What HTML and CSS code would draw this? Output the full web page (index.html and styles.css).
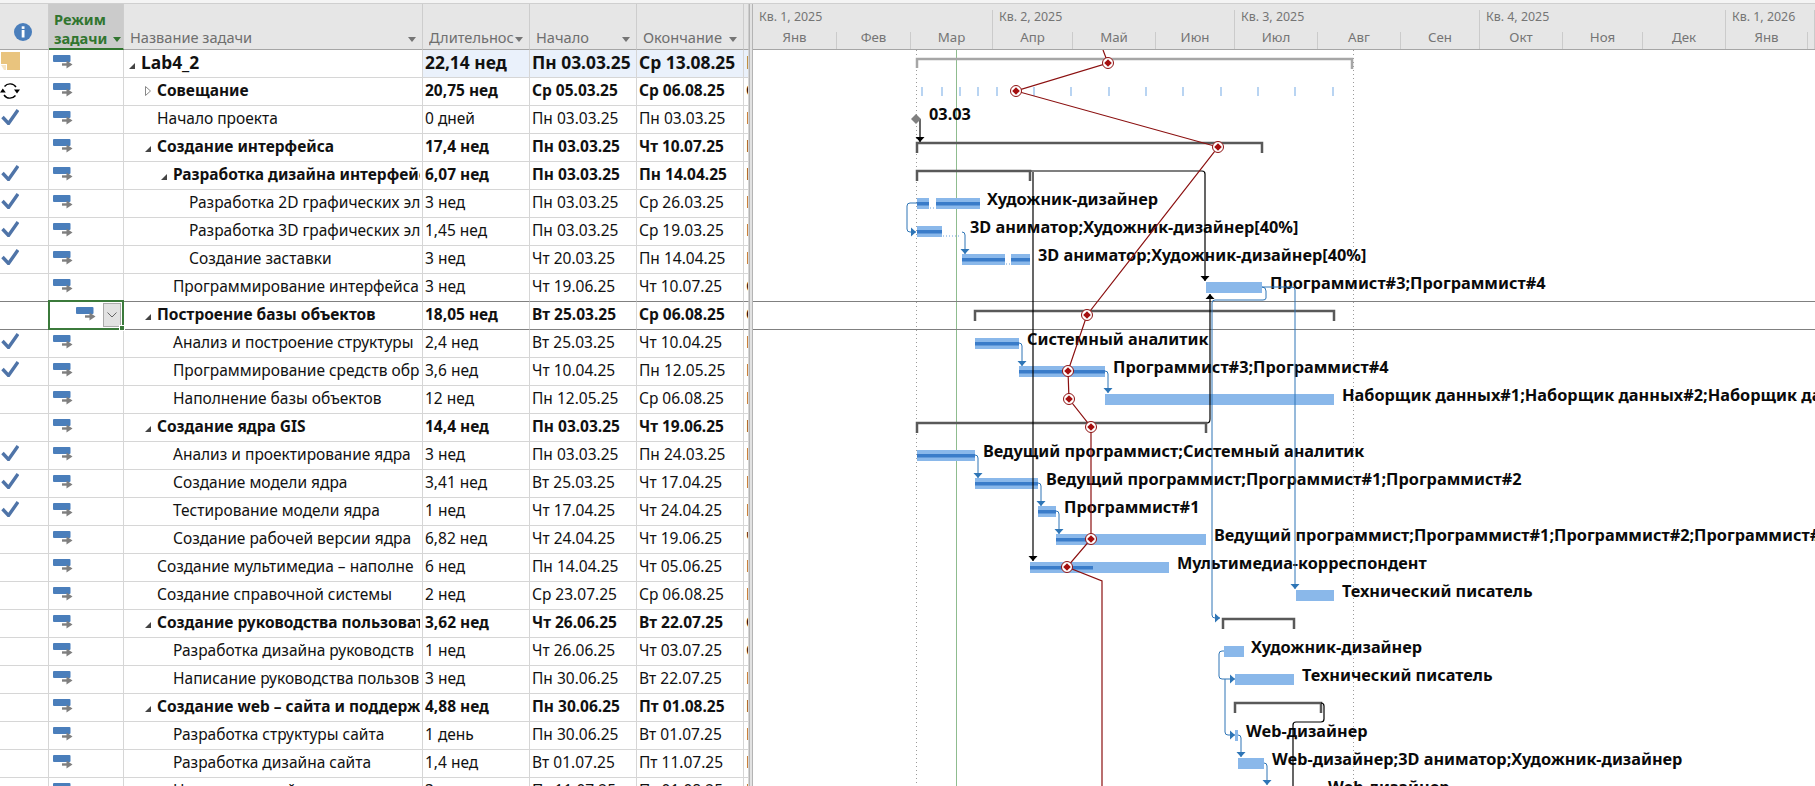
FILE: index.html
```html
<!DOCTYPE html>
<html>
<head>
  <meta charset="utf-8" />
  <title>Lab4_2</title>
  <link rel="stylesheet" href="styles.css">
</head>
<body>
  <svg class="sprite" width="0" height="0">
    <symbol id="i-mode" viewBox="0 0 20 14">
      <rect x="0" y="0" width="17.500" height="7" rx="1" fill="#4a7ebb" />
      <path d="M8 9.500h6" stroke="#fff" stroke-width="5" />
      <path d="M9 9.500h6" stroke="#7f7f7f" stroke-width="2.400" />
      <path d="M13.500 5.500l6 4-6 4z" fill="#7f7f7f" />
    </symbol>
    <symbol id="i-check" viewBox="0 0 18 16">
      <path d="M1.500 8l6 6.500L17 1" fill="none" stroke="#4f74a8" stroke-width="3.400" />
    </symbol>
    <symbol id="i-open" viewBox="0 0 6 6">
      <path d="M6 0v6H0z" fill="#444" />
    </symbol>
    <symbol id="i-closed" viewBox="0 0 6 10">
      <path d="M.5.5l5 4.500-5 4.500z" fill="#fff" stroke="#888" />
    </symbol>
  </svg>

  <div class="topstrip"></div>

  <div class="view">
    <div class="sheet">
      <table>
        <colgroup>
          <col class="c-ind"><col class="c-mode"><col class="c-name"><col class="c-date"><col class="c-date"><col class="c-date"><col class="c-rest">
        </colgroup>
        <thead>
          <tr>
            <th class="th-info">
              <svg width="18" height="18" viewBox="0 0 18 18"><circle cx="9" cy="9" r="9" fill="#4a7ebb" /><rect x="7.700" y="7" width="2.800" height="7.500" fill="#fff" /><rect x="7.700" y="3.300" width="2.800" height="2.600" fill="#fff" /></svg>
            </th>
            <th class="th-mode">Режим<br>задачи <i class="sort green"></i></th>
            <th><div class="th-in"><span>Название задачи</span><i class="sort"></i></div></th>
            <th><div class="th-in"><span class="th-cut">Длительнос</span><i class="sort"></i></div></th>
            <th><div class="th-in"><span>Начало</span><i class="sort"></i></div></th>
            <th><div class="th-in"><span>Окончание</span><i class="sort"></i></div></th>
            <th></th>
          </tr>
        </thead>
        <tbody>
          <tr class="sum root">
            <td class="ind"><svg class="ic-note" width="19" height="18" viewBox="0 0 19 18"><path d="M0 0h19v18H6V12H0z" fill="#e9c47e" /><path d="M0 13h5v5H3z" fill="#e9c47e" opacity=".45" /></svg></td>
            <td class="mode"><svg class="ic"><use href="#i-mode" /></svg></td>
            <td class="name"><div class="l0"><svg class="tg"><use href="#i-open" /></svg>Lab4_2</div></td>
            <td class="hl">22,14 нед</td><td class="hl">Пн 03.03.25</td><td class="hl">Ср 13.08.25</td><td class="hl">П</td>
          </tr>
          <tr class="sum">
            <td class="ind"><svg class="ic-rec" width="20" height="18" viewBox="0 0 20 18"><path d="M4.500 4.500A7.200 7.200 0 0 1 16 5M15.500 13.500A7.200 7.200 0 0 1 4 13" fill="none" stroke="#000" stroke-width="1.400" /><path d="M0 10.500l2.800-4 3 4zM14 7.500l3 4 3-4z" fill="#000" /></svg></td>
            <td class="mode"><svg class="ic"><use href="#i-mode" /></svg></td>
            <td class="name"><div class="l1"><svg class="tg tg-c"><use href="#i-closed" /></svg>Совещание</div></td>
            <td>20,75 нед</td><td>Ср 05.03.25</td><td>Ср 06.08.25</td><td>С</td>
          </tr>
          <tr>
            <td class="ind"><svg class="ic-check"><use href="#i-check" /></svg></td>
            <td class="mode"><svg class="ic"><use href="#i-mode" /></svg></td>
            <td class="name"><div class="l1">Начало проекта</div></td>
            <td>0 дней</td><td>Пн 03.03.25</td><td>Пн 03.03.25</td><td>П</td>
          </tr>
          <tr class="sum">
            <td class="ind"></td>
            <td class="mode"><svg class="ic"><use href="#i-mode" /></svg></td>
            <td class="name"><div class="l1"><svg class="tg"><use href="#i-open" /></svg>Создание интерфейса</div></td>
            <td>17,4 нед</td><td>Пн 03.03.25</td><td>Чт 10.07.25</td><td>П</td>
          </tr>
          <tr class="sum">
            <td class="ind"><svg class="ic-check"><use href="#i-check" /></svg></td>
            <td class="mode"><svg class="ic"><use href="#i-mode" /></svg></td>
            <td class="name"><div class="l2"><svg class="tg"><use href="#i-open" /></svg>Разработка дизайна интерфейс</div></td>
            <td>6,07 нед</td><td>Пн 03.03.25</td><td>Пн 14.04.25</td><td>П</td>
          </tr>
          <tr>
            <td class="ind"><svg class="ic-check"><use href="#i-check" /></svg></td>
            <td class="mode"><svg class="ic"><use href="#i-mode" /></svg></td>
            <td class="name"><div class="l3">Разработка 2D графических эл</div></td>
            <td>3 нед</td><td>Пн 03.03.25</td><td>Ср 26.03.25</td><td>П</td>
          </tr>
          <tr>
            <td class="ind"><svg class="ic-check"><use href="#i-check" /></svg></td>
            <td class="mode"><svg class="ic"><use href="#i-mode" /></svg></td>
            <td class="name"><div class="l3">Разработка 3D графических эл</div></td>
            <td>1,45 нед</td><td>Пн 03.03.25</td><td>Ср 19.03.25</td><td>П</td>
          </tr>
          <tr>
            <td class="ind"><svg class="ic-check"><use href="#i-check" /></svg></td>
            <td class="mode"><svg class="ic"><use href="#i-mode" /></svg></td>
            <td class="name"><div class="l3">Создание заставки</div></td>
            <td>3 нед</td><td>Чт 20.03.25</td><td>Пн 14.04.25</td><td>П</td>
          </tr>
          <tr class="above-sel">
            <td class="ind"></td>
            <td class="mode"><svg class="ic"><use href="#i-mode" /></svg></td>
            <td class="name"><div class="l2">Программирование интерфейса</div></td>
            <td>3 нед</td><td>Чт 19.06.25</td><td>Чт 10.07.25</td><td>С</td>
          </tr>
          <tr class="sum selected">
            <td class="ind"></td>
            <td class="mode sel">
              <div class="sel-in">
                <svg class="ic"><use href="#i-mode" /></svg>
                <span class="drop"><svg width="10" height="6" viewBox="0 0 10 6"><path d="M.5.5L5 5 9.500.5" fill="none" stroke="#666" /></svg></span>
              </div>
            </td>
            <td class="name"><div class="l1"><svg class="tg"><use href="#i-open" /></svg>Построение базы объектов</div></td>
            <td>18,05 нед</td><td>Вт 25.03.25</td><td>Ср 06.08.25</td><td>С</td>
          </tr>
          <tr>
            <td class="ind"><svg class="ic-check"><use href="#i-check" /></svg></td>
            <td class="mode"><svg class="ic"><use href="#i-mode" /></svg></td>
            <td class="name"><div class="l2">Анализ и построение структуры</div></td>
            <td>2,4 нед</td><td>Вт 25.03.25</td><td>Чт 10.04.25</td><td>П</td>
          </tr>
          <tr>
            <td class="ind"><svg class="ic-check"><use href="#i-check" /></svg></td>
            <td class="mode"><svg class="ic"><use href="#i-mode" /></svg></td>
            <td class="name"><div class="l2">Программирование средств обр</div></td>
            <td>3,6 нед</td><td>Чт 10.04.25</td><td>Пн 12.05.25</td><td>П</td>
          </tr>
          <tr>
            <td class="ind"></td>
            <td class="mode"><svg class="ic"><use href="#i-mode" /></svg></td>
            <td class="name"><div class="l2">Наполнение базы объектов</div></td>
            <td>12 нед</td><td>Пн 12.05.25</td><td>Ср 06.08.25</td><td>П</td>
          </tr>
          <tr class="sum">
            <td class="ind"></td>
            <td class="mode"><svg class="ic"><use href="#i-mode" /></svg></td>
            <td class="name"><div class="l1"><svg class="tg"><use href="#i-open" /></svg>Создание ядра GIS</div></td>
            <td>14,4 нед</td><td>Пн 03.03.25</td><td>Чт 19.06.25</td><td>П</td>
          </tr>
          <tr>
            <td class="ind"><svg class="ic-check"><use href="#i-check" /></svg></td>
            <td class="mode"><svg class="ic"><use href="#i-mode" /></svg></td>
            <td class="name"><div class="l2">Анализ и проектирование ядра</div></td>
            <td>3 нед</td><td>Пн 03.03.25</td><td>Пн 24.03.25</td><td>П</td>
          </tr>
          <tr>
            <td class="ind"><svg class="ic-check"><use href="#i-check" /></svg></td>
            <td class="mode"><svg class="ic"><use href="#i-mode" /></svg></td>
            <td class="name"><div class="l2">Создание модели ядра</div></td>
            <td>3,41 нед</td><td>Вт 25.03.25</td><td>Чт 17.04.25</td><td>П</td>
          </tr>
          <tr>
            <td class="ind"><svg class="ic-check"><use href="#i-check" /></svg></td>
            <td class="mode"><svg class="ic"><use href="#i-mode" /></svg></td>
            <td class="name"><div class="l2">Тестирование модели ядра</div></td>
            <td>1 нед</td><td>Чт 17.04.25</td><td>Чт 24.04.25</td><td>П</td>
          </tr>
          <tr>
            <td class="ind"></td>
            <td class="mode"><svg class="ic"><use href="#i-mode" /></svg></td>
            <td class="name"><div class="l2">Создание рабочей версии ядра</div></td>
            <td>6,82 нед</td><td>Чт 24.04.25</td><td>Чт 19.06.25</td><td>Ч</td>
          </tr>
          <tr>
            <td class="ind"></td>
            <td class="mode"><svg class="ic"><use href="#i-mode" /></svg></td>
            <td class="name"><div class="l1">Создание мультимедиа – наполне</div></td>
            <td>6 нед</td><td>Пн 14.04.25</td><td>Чт 05.06.25</td><td>П</td>
          </tr>
          <tr>
            <td class="ind"></td>
            <td class="mode"><svg class="ic"><use href="#i-mode" /></svg></td>
            <td class="name"><div class="l1">Создание справочной системы</div></td>
            <td>2 нед</td><td>Ср 23.07.25</td><td>Ср 06.08.25</td><td>П</td>
          </tr>
          <tr class="sum">
            <td class="ind"></td>
            <td class="mode"><svg class="ic"><use href="#i-mode" /></svg></td>
            <td class="name"><div class="l1"><svg class="tg"><use href="#i-open" /></svg>Создание руководства пользоват</div></td>
            <td>3,62 нед</td><td>Чт 26.06.25</td><td>Вт 22.07.25</td><td>С</td>
          </tr>
          <tr>
            <td class="ind"></td>
            <td class="mode"><svg class="ic"><use href="#i-mode" /></svg></td>
            <td class="name"><div class="l2">Разработка дизайна руководств</div></td>
            <td>1 нед</td><td>Чт 26.06.25</td><td>Чт 03.07.25</td><td>С</td>
          </tr>
          <tr>
            <td class="ind"></td>
            <td class="mode"><svg class="ic"><use href="#i-mode" /></svg></td>
            <td class="name"><div class="l2">Написание руководства пользов</div></td>
            <td>3 нед</td><td>Пн 30.06.25</td><td>Вт 22.07.25</td><td>П</td>
          </tr>
          <tr class="sum">
            <td class="ind"></td>
            <td class="mode"><svg class="ic"><use href="#i-mode" /></svg></td>
            <td class="name"><div class="l1"><svg class="tg"><use href="#i-open" /></svg>Создание web – сайта и поддерж</div></td>
            <td>4,88 нед</td><td>Пн 30.06.25</td><td>Пт 01.08.25</td><td>П</td>
          </tr>
          <tr>
            <td class="ind"></td>
            <td class="mode"><svg class="ic"><use href="#i-mode" /></svg></td>
            <td class="name"><div class="l2">Разработка структуры сайта</div></td>
            <td>1 день</td><td>Пн 30.06.25</td><td>Вт 01.07.25</td><td>П</td>
          </tr>
          <tr>
            <td class="ind"></td>
            <td class="mode"><svg class="ic"><use href="#i-mode" /></svg></td>
            <td class="name"><div class="l2">Разработка дизайна сайта</div></td>
            <td>1,4 нед</td><td>Вт 01.07.25</td><td>Пт 11.07.25</td><td>П</td>
          </tr>
          <tr>
            <td class="ind"></td>
            <td class="mode"><svg class="ic"><use href="#i-mode" /></svg></td>
            <td class="name"><div class="l2">Наполнение сайта</div></td>
            <td>3 нед</td><td>Пт 11.07.25</td><td>Пт 01.08.25</td><td>П</td>
          </tr>
        </tbody>
      </table>
    </div>

    <div class="splitter"></div>

    <div class="gantt">
      <div class="timescale">
        <div class="quarters">
          <div>Кв. 1, 2025</div><div>Кв. 2, 2025</div><div>Кв. 3, 2025</div><div>Кв. 4, 2025</div><div>Кв. 1, 2026</div>
        </div>
        <div class="months">
          <div>Янв</div><div>Фев</div><div>Мар</div><div>Апр</div><div>Май</div><div>Июн</div><div>Июл</div><div>Авг</div><div>Сен</div><div>Окт</div><div>Ноя</div><div>Дек</div><div>Янв</div><div></div>
        </div>
      </div>

      <div class="chart">
        <!-- viewBox uses page coordinates, chart starts at 753,50 -->
        <svg class="chart-svg" width="1062" height="736" viewBox="753 50 1062 736">
          <defs>
            <marker id="a-blue" markerUnits="userSpaceOnUse" markerWidth="10" markerHeight="10" refX="6" refY="5" orient="auto">
              <path d="M1 0.500L6 5 1 9.500z" fill="#2e75b6" />
            </marker>
            <marker id="a-black" markerUnits="userSpaceOnUse" markerWidth="10" markerHeight="10" refX="6" refY="5" orient="auto">
              <path d="M1 0.500L6 5 1 9.500z" fill="#000" />
            </marker>
            <g id="dot">
              <circle r="5.500" fill="#fff" stroke="#8e1212" stroke-width="1" />
              <path d="M0-3.800L3.800 0 0 3.800-3.800 0z" fill="#a50f0f" />
            </g>
          </defs>

          <!-- guides -->
          <path class="guide" d="M916.500 50V786M1353.500 50V786" />
          <path class="today" d="M956.500 50V786" />
          <path class="sel-line" d="M753 301.500H1815M753 329.500H1815" />

          <!-- summary bars -->
          <path class="sum-root" d="M917 68V59H1352V69" />
          <path class="sum-bar" d="M917 153V143H1262V153" />
          <path class="sum-bar" d="M917 181V171H1030V181" />
          <path class="sum-bar" d="M975 321V311H1334V321" />
          <path class="sum-bar" d="M917 433V423H1206V433" />
          <path class="sum-bar" d="M1223 629V619H1294V629" />
          <path class="sum-bar" d="M1235 713V703H1321V713" />

          <!-- meeting ticks -->
          <path class="ticks" d="M922 87v9M942 87v9M960 87v9M978 87v9M997 87v9M1034 87v9M1071 87v9M1109 87v9M1146 87v9M1183 87v9M1221 87v9M1258 87v9M1295 87v9M1333 87v9" />

          <!-- task bars -->
          <g class="bars">
            <rect x="917" y="198" width="12" height="11" /><rect x="936" y="198" width="44" height="11" />
            <rect x="917" y="226" width="25" height="11" />
            <rect x="962" y="254" width="43" height="11" /><rect x="1011" y="254" width="19" height="11" />
            <rect x="1206" y="282" width="56" height="11" />
            <rect x="975" y="338" width="44" height="11" />
            <rect x="1019" y="366" width="86" height="11" />
            <rect x="1105" y="394" width="229" height="11" />
            <rect x="917" y="450" width="58" height="11" />
            <rect x="975" y="478" width="63" height="11" />
            <rect x="1038" y="506" width="18" height="11" />
            <rect x="1056" y="534" width="150" height="11" />
            <rect x="1030" y="562" width="139" height="11" />
            <rect x="1296" y="590" width="38" height="11" />
            <rect x="1224" y="646" width="20" height="11" />
            <rect x="1235" y="674" width="59" height="11" />
            <rect x="1235" y="730" width="3" height="11" />
            <rect x="1238" y="758" width="26" height="11" />
          </g>
          <g class="progress">
            <rect x="917" y="202" width="12" height="3.500" /><rect x="936" y="202" width="44" height="3.500" />
            <rect x="917" y="230" width="25" height="3.500" />
            <rect x="962" y="258" width="43" height="3.500" /><rect x="1011" y="258" width="19" height="3.500" />
            <rect x="975" y="342" width="44" height="3.500" />
            <rect x="1019" y="370" width="86" height="3.500" />
            <rect x="917" y="454" width="58" height="3.500" />
            <rect x="975" y="482" width="63" height="3.500" />
            <rect x="1038" y="510" width="18" height="3.500" />
            <rect x="1056" y="538" width="35" height="3.500" />
            <rect x="1030" y="566" width="63" height="3.500" />
          </g>
          <path class="split" d="M930 208h5M943 236h18M1006 264h4" />

          <!-- resource labels -->
          <g class="labels">
            <text x="929" y="120">03.03</text>
            <text x="987" y="205">Художник-дизайнер</text>
            <text x="970" y="233">3D аниматор;Художник-дизайнер[40%]</text>
            <text x="1038" y="261">3D аниматор;Художник-дизайнер[40%]</text>
            <text x="1270" y="289">Программист#3;Программист#4</text>
            <text x="1027" y="345">Системный аналитик</text>
            <text x="1113" y="373">Программист#3;Программист#4</text>
            <text x="1342" y="401">Наборщик данных#1;Наборщик данных#2;Наборщик данных#3</text>
            <text x="983" y="457">Ведущий программист;Системный аналитик</text>
            <text x="1046" y="485">Ведущий программист;Программист#1;Программист#2</text>
            <text x="1064" y="513">Программист#1</text>
            <text x="1214" y="541">Ведущий программист;Программист#1;Программист#2;Программист#3</text>
            <text x="1177" y="569">Мультимедиа-корреспондент</text>
            <text x="1342" y="597">Технический писатель</text>
            <text x="1251" y="653">Художник-дизайнер</text>
            <text x="1302" y="681">Технический писатель</text>
            <text x="1246" y="737">Web-дизайнер</text>
            <text x="1272" y="765">Web-дизайнер;3D аниматор;Художник-дизайнер</text>
            <text x="1328" y="793">Web-дизайнер</text>
          </g>

          <!-- black links -->
          <g class="link-black">
            <path d="M920 119V142" marker-end="url(#a-black)" />
            <path d="M1031 171H1202Q1205 171 1205 174V281" marker-end="url(#a-black)" />
            <path d="M1033 172V561" marker-end="url(#a-black)" />
            <path d="M1207 423Q1210 423 1210 419V294" marker-end="url(#a-black)" />
            <path d="M1321 703Q1324 703 1324 706V719Q1324 722 1321 722H1296Q1293 722 1293 725V786" />
          </g>

          <!-- blue links -->
          <g class="link-blue">
            <path d="M917 203H910Q907 203 907 206V229Q907 232 910 232H916" marker-end="url(#a-blue)" />
            <path d="M962 232Q965 232 965 235V254" marker-end="url(#a-blue)" />
            <path d="M1262 287H1292Q1295 287 1295 290V589" marker-end="url(#a-blue)" />
            <path d="M1262 287Q1266 287 1266 291V298Q1266 300 1263 300H1215Q1212 300 1212 303V615Q1212 618 1215 618H1220" marker-end="url(#a-blue)" />
            <path d="M1019 343Q1022 343 1022 346V366" marker-end="url(#a-blue)" />
            <path d="M1105 371Q1108 371 1108 374V393" marker-end="url(#a-blue)" />
            <path d="M975 455Q978 455 978 458V478" marker-end="url(#a-blue)" />
            <path d="M1038 483Q1041 483 1041 486V506" marker-end="url(#a-blue)" />
            <path d="M1056 511Q1059 511 1059 514V534" marker-end="url(#a-blue)" />
            <path d="M1224 651H1222Q1219 651 1219 654V676Q1219 679 1222 679H1235" marker-end="url(#a-blue)" />
            <path d="M1225 679V732Q1225 735 1228 735H1235" marker-end="url(#a-blue)" />
            <path d="M1238 735Q1241 735 1241 738V757" marker-end="url(#a-blue)" />
            <path d="M1264 763Q1267 763 1267 766V785" marker-end="url(#a-blue)" />
          </g>

          <!-- milestone -->
          <path d="M916 114l5 5-5 5-5-5z" fill="#808080" />

          <!-- progress line -->
          <path class="track" d="M1103 50L1108 63 1016 91 1218 147 1087 315 1068 371 1069 399 1091 427V539L1067 567 1102 581V786" />
          <use href="#dot" x="1108" y="63" />
          <use href="#dot" x="1016" y="91" />
          <use href="#dot" x="1218" y="147" />
          <use href="#dot" x="1087" y="315" />
          <use href="#dot" x="1068" y="371" />
          <use href="#dot" x="1069" y="399" />
          <use href="#dot" x="1091" y="427" />
          <use href="#dot" x="1091" y="539" />
          <use href="#dot" x="1067" y="567" />
        </svg>
      </div>
    </div>
  </div>
</body>
</html>
```

FILE: styles.css
```css
html, body {
  margin: 0;
  height: 100%;
  overflow: hidden;
  background: #fff;
}

body {
  font-family: "Noto Sans", "Open Sans", sans-serif;
  font-size: 15.5px;
  color: #111;
}

.sprite {
  position: absolute;
}

.topstrip {
  height: 3px;
  background: #f4f4f4;
  border-bottom: 1px solid #cfcfcf;
}

.view {
  display: flex;
  height: 782px;
}

.sheet {
  width: 749px;
  flex: none;
  overflow: hidden;
}

.splitter {
  width: 2px;
  flex: none;
  background: #e2e2e2;
  border-left: 1px solid #b4b4b4;
  border-right: 1px solid #b4b4b4;
}

/* task table */
table {
  width: 749px;
  table-layout: fixed;
  border-collapse: separate;
  border-spacing: 0;
}

.c-ind { width: 49px; }
.c-mode { width: 75px; }
.c-name { width: 299px; }
.c-date { width: 107px; }
.c-rest { width: 5px; }

th {
  box-sizing: border-box;
  height: 46px;
  padding: 0;
  background: #e6e6e6;
  border-right: 1px solid #cdcdcd;
  border-bottom: 1px solid #a6a6a6;
  font-weight: normal;
  color: #6f6f6f;
  text-align: left;
  vertical-align: bottom;
  font-size: 14.6px;
}

.th-info {
  vertical-align: middle;
}

.th-info svg {
  display: block;
  margin: 11px 0 0 14px;
}

.th-mode {
  background: #cbcbcb;
  border-bottom: 2px solid #31752f;
  color: #31752f;
  font-weight: bold;
  line-height: 19px;
  padding: 6px 0 0 5px;
  font-size: 14.6px;
  vertical-align: top;
}

.th-in {
  display: flex;
  align-items: center;
  justify-content: space-between;
  padding: 0 6px 2px 6px;
  line-height: 20px;
}

.th-cut {
  flex: 1;
  overflow: hidden;
  white-space: nowrap;
}

.sort {
  display: inline-block;
  width: 0;
  height: 0;
  margin-top: 4px;
  border-left: 4px solid transparent;
  border-right: 4px solid transparent;
  border-top: 5px solid #757575;
}

.sort.green {
  border-top-color: #31752f;
  margin: 0 0 2px 2px;
  vertical-align: middle;
}

td {
  box-sizing: border-box;
  height: 28px;
  padding: 0 0 0 2px;
  border-right: 1px solid #d6d6d6;
  border-bottom: 1px solid #d6d6d6;
  white-space: nowrap;
  overflow: hidden;
  line-height: 24px;
  vertical-align: top;
}

tr.sum td {
  font-weight: bold;
}

tr.root td {
  font-size: 17.4px;
  line-height: 25px;
}

.hl {
  background: #eaf1fb;
}

.ind {
  padding: 0;
  position: relative;
}

.ic-check {
  display: block;
  width: 18px;
  height: 16px;
  margin: 3px 0 0 1px;
}

.ic-note {
  display: block;
  margin: 2px 0 0 1px;
}

.ic-rec {
  display: block;
  margin: 4px 0 0 0;
}

.mode {
  padding: 0;
}

.ic {
  display: block;
  width: 20px;
  height: 14px;
  margin: 5px 0 0 4px;
}

.above-sel td {
  border-bottom-color: #808080;
}

.selected td {
  border-bottom-color: #808080;
}

td.sel {
  position: relative;
  overflow: visible;
}

.sel::after {
  content: "";
  position: absolute;
  top: -2px;
  left: -1px;
  right: -1px;
  bottom: -1px;
  border: 2px solid #3b7a3b;
  pointer-events: none;
}

.sel::before {
  content: "";
  position: absolute;
  right: -2px;
  bottom: -2px;
  width: 4px;
  height: 4px;
  background: #3b7a3b;
  border: 1px solid #fff;
  z-index: 1;
}

.sel-in {
  display: flex;
  justify-content: flex-end;
  align-items: flex-start;
  gap: 7px;
  height: 27px;
  padding-right: 2px;
}

.sel-in .ic {
  margin: 5px 0 0 0;
}

.drop {
  display: flex;
  align-items: center;
  justify-content: center;
  width: 18px;
  height: 24px;
  margin-top: 1px;
  background: #e2e2e2;
  border: 1px solid #ababab;
  box-sizing: border-box;
}

.name {
  padding: 0 2px 0 0;
}

.name div {
  overflow: hidden;
}

.l0 { padding-left: 17px; }
.l1 { padding-left: 33px; }
.l2 { padding-left: 49px; }
.l3 { padding-left: 65px; }

.tg {
  width: 6px;
  height: 6px;
  margin-left: -12px;
  margin-right: 6px;
}

.tg-c {
  height: 10px;
}

/* gantt side */
.gantt {
  flex: 1;
  min-width: 0;
}

.timescale {
  height: 45px;
  background: #e6e6e6;
  border-bottom: 1px solid #a6a6a6;
  color: #757575;
  overflow: hidden;
}

.quarters {
  display: grid;
  grid-template-columns: 240px 242px 245px 246px 89px;
  height: 28px;
  font-size: 12.4px;
}

.quarters div {
  margin-top: 6px;
  padding-left: 6px;
  border-right: 1px solid #cbcbcb;
  line-height: 14px;
}

.months {
  display: grid;
  grid-template-columns: 84px 74px 82px 80px 83px 79px 83px 83px 79px 83px 80px 83px 82px 7px;
  height: 17px;
  line-height: 10px;
  text-align: center;
  font-size: 13.3px;
}

.months div {
  border-right: 1px solid #cbcbcb;
}

.chart {
  position: relative;
  height: 736px;
  overflow: hidden;
}

.chart-svg {
  position: absolute;
  left: 0;
  top: 0;
}

.guide {
  stroke: #9a9a9a;
  stroke-width: 1;
  stroke-dasharray: 1 3;
  fill: none;
}

.today {
  stroke: #8fbc8f;
  stroke-width: 1;
  fill: none;
}

.sel-line {
  stroke: #808080;
  stroke-width: 1;
  fill: none;
}

.sum-root {
  fill: none;
  stroke: #a6a6a6;
  stroke-width: 2.5;
}

.sum-bar {
  fill: none;
  stroke: #595959;
  stroke-width: 2.5;
}

.ticks {
  stroke: #8ab8ea;
  stroke-width: 1.2;
  fill: none;
}

.bars rect {
  fill: #8ab8ea;
}

.progress rect {
  fill: #3a7cc9;
}

.split {
  stroke: #6aa0d8;
  stroke-width: 1;
  stroke-dasharray: 1 2;
  fill: none;
}

.labels text {
  font-size: 16.3px;
  font-weight: bold;
  fill: #0a0a0a;
}

.link-black path {
  fill: none;
  stroke: #000;
  stroke-width: 1.2;
}

.link-blue path {
  fill: none;
  stroke: #2e75b6;
  stroke-width: 1;
}

.track {
  fill: none;
  stroke: #8b1010;
  stroke-width: 1.2;
}
```
